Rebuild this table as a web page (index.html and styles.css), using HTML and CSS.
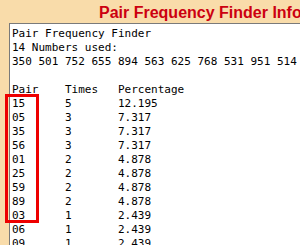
FILE: index.html
```html
<!DOCTYPE html>
<html>
<head>
<meta charset="utf-8">
<link rel="stylesheet" href="styles.css">
</head>
<body>
<div class="page">
  <header class="title-bar"><h1 class="title">Pair Frequency Finder Info</h1></header>
  <main class="panel">
<pre class="report">Pair Frequency Finder
14 Numbers used:
350 501 752 655 894 563 625 768 531 951 514

Pair    Times   Percentage
15      5       12.195
05      3       7.317
35      3       7.317
56      3       7.317
01      2       4.878
25      2       4.878
59      2       4.878
89      2       4.878
03      1       2.439
06      1       2.439
09      1       2.439
</pre>
  </main>
  <div class="highlight"></div>
</div>
</body>
</html>
```
FILE: styles.css
```css
html, body {
  margin: 0;
  padding: 0;
  width: 300px;
  height: 245px;
  overflow: hidden;
  background: #f9dcaa;
}
.page {
  position: relative;
  width: 300px;
  height: 245px;
  display: flex;
  flex-direction: column;
}
.title-bar {
  height: 21px;
  padding-top: 2px;
  padding-left: 99px;
  white-space: nowrap;
  overflow: hidden;
}
.title {
  margin: 0;
  font-family: "Liberation Sans", Arial, sans-serif;
  font-weight: bold;
  font-size: 16px;
  line-height: 21px;
  color: #cc0010;
}
.panel {
  flex: 1;
  margin-left: 9px;
  background: #ffffff;
  border-top: 1px solid #7a7a7a;
  border-left: 1px solid #7a7a7a;
  padding: 3px 0 0 2px;
  overflow: hidden;
}
.report {
  margin: 0;
  font-family: "DejaVu Sans Mono", "Liberation Mono", monospace;
  font-size: 11px;
  line-height: 14px;
  color: #000;
  white-space: pre;
}
.highlight {
  position: absolute;
  left: 5px;
  top: 94px;
  width: 28px;
  height: 123px;
  border: 3px solid #ee0000;
}
```
